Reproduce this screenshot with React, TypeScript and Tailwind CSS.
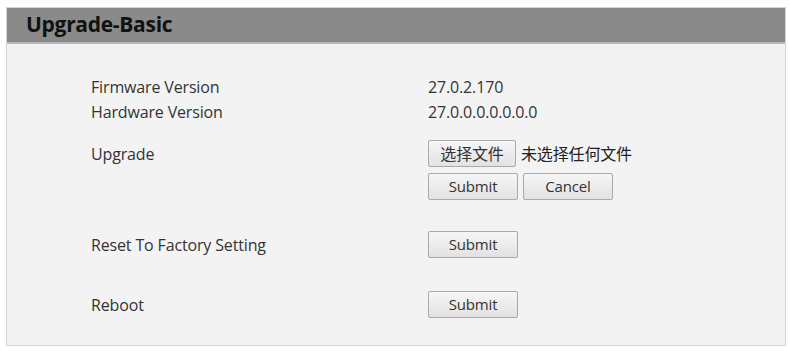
import React from "react";

const font = { fontFamily: '"Open Sans", "Noto Sans CJK SC", sans-serif' };

function Btn({ children, w = "w-[90px]", cls = "text-[15px]" }: { children: React.ReactNode; w?: string; cls?: string }) {
  return (
    <button
      className={`${w} h-[27px] border border-[#a9a9a9] rounded-[2px] bg-gradient-to-b from-[#f6f6f6] to-[#e2e2e2] ${cls} text-[#333] flex items-center justify-center`}
      style={font}
    >
      {children}
    </button>
  );
}

export default function App() {
  return (
    <div className="w-[790px] h-[351px] bg-white pt-[7px] pl-[6px]" style={font}>
      <div className="w-[780px] h-[339px] border border-[#d4d4d4] bg-[#f3f3f3] flex flex-col">
        <div className="h-[36px] bg-[#8a8a8a] border-b-2 border-[#b8b8b8] flex items-center pl-[19px]">
          <span className="text-[21px] font-bold text-[#111] tracking-[-0.3px]" style={font}>
            Upgrade-Basic
          </span>
        </div>
        <div className="flex flex-col pl-[84px] pt-[31px] text-[16px] text-[#333] tracking-[-0.15px]">
          <div className="flex h-[24px] items-center">
            <div className="w-[337px]">Firmware Version</div>
            <div>27.0.2.170</div>
          </div>
          <div className="flex h-[26px] items-center">
            <div className="w-[337px]">Hardware Version</div>
            <div>27.0.0.0.0.0.0.0</div>
          </div>
          <div className="flex mt-[15px]">
            <div className="w-[337px] pt-[2px]">Upgrade</div>
            <div className="flex flex-col gap-[6px]">
              <div className="flex items-center gap-[5px]">
                <Btn w="w-[88px]" cls="text-[16px]">选择文件</Btn>
                <span className="text-[16px] text-[#222]">未选择任何文件</span>
              </div>
              <div className="flex gap-[5px]">
                <Btn>Submit</Btn>
                <Btn>Cancel</Btn>
              </div>
            </div>
          </div>
          <div className="flex items-center mt-[31px]">
            <div className="w-[337px]">Reset To Factory Setting</div>
            <Btn>Submit</Btn>
          </div>
          <div className="flex items-center mt-[33px]">
            <div className="w-[337px]">Reboot</div>
            <Btn>Submit</Btn>
          </div>
        </div>
      </div>
    </div>
  );
}
